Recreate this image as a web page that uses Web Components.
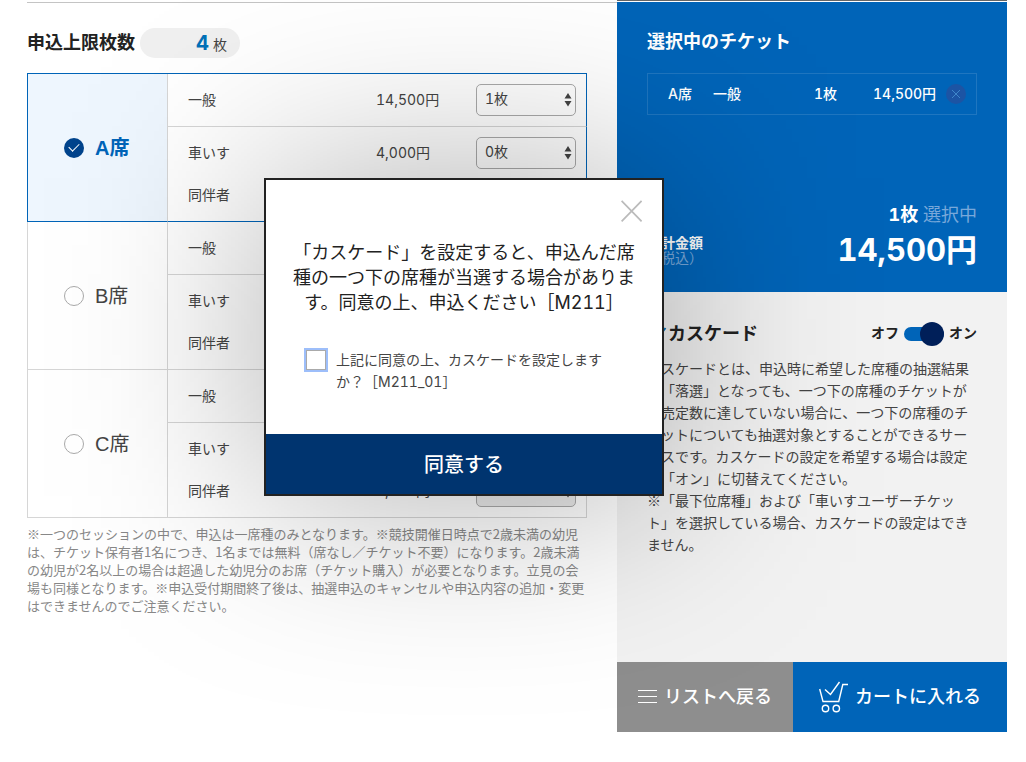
<!DOCTYPE html>
<html lang="ja">
<head>
<meta charset="utf-8">
<meta name="viewport" content="width=device-width, initial-scale=1">
<title>チケット抽選申込</title>
<style>
  html, body { margin: 0; min-height: 100%; background: #fff; }
  body {
    --blue: #0064b8;
    --navy: #00346f;
    --line: #d6d6d6;
    font: 14px/22px Inter, "Noto Sans CJK JP", sans-serif;
    font-variant-numeric: tabular-nums;
    text-spacing-trim: space-all;
    color: #444;
  }
</style>
</head>
<body>
<ticket-page>
  <limit-badge slot="main" count="4">申込上限枚数</limit-badge>
  <seat-table slot="main"></seat-table>
  <session-note slot="main">※一つのセッションの中で、申込は一席種のみとなります。※競技開催日時点で2歳未満の幼児は、チケット保有者1名につき、1名までは無料（席なし／チケット不要）になります。2歳未満の幼児が2名以上の場合は超過した幼児分のお席（チケット購入）が必要となります。立見の会場も同様となります。※申込受付期間終了後は、抽選申込のキャンセルや申込内容の追加・変更はできませんのでご注意ください。</session-note>
  <order-summary slot="side"></order-summary>
  <cascade-panel slot="side">カスケードとは、申込時に希望した席種の抽選結果が「落選」となっても、一つ下の席種のチケットが販売定数に達していない場合に、一つ下の席種のチケットについても抽選対象とすることができるサービスです。カスケードの設定を希望する場合は設定を「オン」に切替えてください。<br>※「最下位席種」および「車いすユーザーチケット」を選択している場合、カスケードの設定はできません。</cascade-panel>
  <action-bar slot="side"></action-bar>
</ticket-page>
<consent-dialog>
  「カスケード」を設定すると、申込んだ席種の一つ下の席種が当選する場合があります。同意の上、申込ください［M211］
  <span slot="check">上記に同意の上、カスケードを設定しますか？［M211_01］</span>
</consent-dialog>

<script>
const define = (name, html, setup) => {
  const template = document.createElement('template');
  template.innerHTML = html;
  customElements.define(name, class extends HTMLElement {
    constructor() {
      super();
      this.attachShadow({ mode: 'open' }).append(template.content.cloneNode(true));
    }
    connectedCallback() {
      if (setup && !this.ready) { this.ready = true; setup(this, this.shadowRoot); }
    }
  });
};

define('ticket-page', `
  <style>
    :host { display: flex; align-items: flex-start; padding: 0 19px 30px 27px; }
    main { flex: 1; min-width: 0; margin-top: 2px; padding: 25px 30px 0 0; border-top: 1px solid #c4c4c4; }
    aside { flex: 0 0 390px; border-top: 1px solid #666; padding-top: 1px; }
  </style>
  <main><slot name="main"></slot></main>
  <aside><slot name="side"></slot></aside>
`);

define('limit-badge', `
  <style>
    :host { display: flex; align-items: center; gap: 5px; margin-bottom: 15px; }
    h2 { margin: 0; font-size: 18px; line-height: 30px; color: #222; }
    p { box-sizing: border-box; width: 100px; height: 30px; margin: 0; padding-right: 13px; border-radius: 15px;
        background: #f0f0f0; text-align: right; line-height: 30px; }
    b { font-size: 20px; color: #0070b8; margin-right: 4px; }
  </style>
  <h2><slot></slot></h2>
  <p><b></b>枚</p>
`, (host, root) => { root.querySelector('b').textContent = host.getAttribute('count'); });

define('count-select', `
  <style>
    :host { display: block; position: relative; width: 100px; height: 32px; }
    select { appearance: none; box-sizing: border-box; width: 100%; height: 32px; padding: 0 24px 2px 8px;
      border: 1px solid #aaa; border-radius: 5px; background: rgba(255,255,255,.2); font: inherit; color: inherit; }
    select:disabled { background: rgba(0,0,0,.08); opacity: 1; }
    svg { position: absolute; right: 4px; top: 9px; pointer-events: none; }
  </style>
  <select></select>
  <svg width="8" height="14" viewBox="0 0 8 14" fill="#444" aria-hidden="true"><path d="M4 0l3.5 5.5h-7zM4 13.500l3.500-5.500h-7z"/></svg>
`, (host, root) => {
  const select = root.querySelector('select');
  select.setAttribute('aria-label', host.getAttribute('label'));
  for (let n = 0; n <= 4; n++) select.add(new Option(n + '枚', n));
  select.value = host.getAttribute('value');
  select.disabled = !host.getAttribute('value');
});

define('seat-table', `
  <style>
    :host { display: block; margin-bottom: 7px; }
    table { width: 100%; border-collapse: separate; border-spacing: 0; table-layout: fixed; border-top: 1px solid var(--blue); }
    th, td { box-sizing: border-box; padding: 0; height: 53px; text-align: left; font-weight: 400; border: 0 solid var(--line); }
    tr.pair > * { height: 52px; }
    tr.last > * { height: 43px; vertical-align: top; line-height: 32px; border-bottom-width: 1px; }
    tr.first > * { border-bottom-width: 1px; }
    .seat { border-width: 0 1px 1px 1px; }
    .kind { padding-left: 20px; }
    .num { border-right-width: 1px; }
    .on .seat { border-left-color: var(--blue); border-bottom-color: var(--blue); background: #eef6fe; }
    .on .num { border-right-color: var(--blue); }
    .on .last > * { border-bottom-color: var(--blue); }
    label { display: flex; align-items: center; gap: 11px; padding-left: 36px; font: 20px/30px "Liberation Sans", "Noto Sans CJK JP", sans-serif; }
    .on label { color: var(--blue); font-weight: 700; }
    input { appearance: none; box-sizing: border-box; position: relative; margin: 0; width: 20px; height: 20px;
      border: 1px solid #aaa; border-radius: 50%; }
    input:checked { border: 0; background: #00438c; }
    input:checked::after { content: ""; position: absolute; left: 5px; top: 5px; width: 9px; height: 5px;
      border: solid #fff; border-width: 0 0 1px 1px; transform: rotate(-45deg); }
  </style>
  <table>
    <colgroup><col style="width:141px"><col><col style="width:100px"><col style="width:111px"></colgroup>
  </table>
`, (host, root) => {
  const table = root.querySelector('table');
  const seats = [
    { name: 'A席', on: true, prices: ['14,500円', '4,000円', ''] },
    { name: 'B席', on: false, prices: ['', '', ''] },
    { name: 'C席', on: false, prices: ['', '', '4,000円'] },
  ];
  const kinds = [['first', '一般'], ['pair', '車いす'], ['last', '同伴者']];
  for (const { name, on, prices } of seats) {
    const head = `<th class="seat" scope="rowgroup" rowspan="3"><label><input type="radio" name="seat" ${on ? 'checked' : ''}>${name}</label></th>`;
    const count = i => on ? (i ? 0 : 1) : '';
    const rows = kinds.map(([cls, kind], i) => `<tr class="${cls}">${i ? '' : head}
      <th class="kind" scope="row">${kind}</th><td>${prices[i]}</td>
      <td class="num"><count-select label="${name} ${kind}" value="${count(i)}"></count-select></td></tr>`);
    table.insertAdjacentHTML('beforeend', `<tbody class="${on ? 'on' : ''}">${rows.join('')}</tbody>`);
  }
});

define('session-note', `
  <style>:host { display: block; font-family: "Noto Sans CJK JP", sans-serif; font-size: 13px; line-height: 18px; color: #888; }</style>
  <slot></slot>
`);

define('order-summary', `
  <style>
    :host { display: flex; flex-direction: column; box-sizing: border-box; min-height: 290px; padding: 25px 30px 20px;
      background: var(--blue); color: #fff; }
    h2 { margin: 0 0 16px; font-size: 18px; line-height: 30px; }
    .item { display: flex; align-items: center; height: 40px; padding: 0 10px 0 20px; border: 1px solid rgba(255,255,255,.12); font-weight: 500; }
    .seat { width: 45px; } .kind { flex: 1; } .count { width: 59px; } .price { width: 73px; }
    button { width: 20px; height: 20px; padding: 0; border: 0; border-radius: 50%; background: #1c54a4; }
    svg { display: block; }
    .sum { display: grid; grid-template-columns: 1fr auto; margin-top: auto; align-items: end; }
    .count-line { grid-column: 1 / 3; text-align: right; font-size: 18px; line-height: 26px; color: #78a8da; }
    .count-line b { color: #fff; }
    .label { line-height: 15px; padding-bottom: 7px; color: #78a8da; }
    .label b { display: block; color: #fff; }
    .total { font-size: 31px; line-height: 44px; font-weight: 700; }
  </style>
  <h2>選択中のチケット</h2>
  <div class="item">
    <span class="seat">A席</span><span class="kind">一般</span><span class="count">1枚</span><span class="price">14,500円</span>
    <button type="button" aria-label="削除"><svg width="20" height="20" viewBox="0 0 20 20" stroke="#3f86ca"><path d="M6 6l8 8M14 6l-8 8"/></svg></button>
  </div>
  <div class="sum">
    <div class="count-line"><b>1枚</b> 選択中</div>
    <div class="label"><b>合計金額</b>（税込）</div>
    <div class="total">14,500円</div>
  </div>
`);

define('cascade-panel', `
  <style>
    :host { display: block; box-sizing: border-box; min-height: 370px; padding: 25px 30px; background: #f2f2f2; font-family: "Noto Sans CJK JP", sans-serif; }
    header { display: flex; align-items: center; height: 30px; margin-bottom: 10px; color: #222; }
    h2 { flex: 1; display: flex; align-items: center; gap: 1px; margin: 0; font-size: 18px; line-height: 28px; }
    label { display: flex; align-items: center; gap: 5px; font-weight: 700; }
    input { appearance: none; position: relative; margin: 4px 0 0; width: 40px; height: 14px; border-radius: 7px; background: var(--blue); }
    input::before { content: ""; position: absolute; top: -5px; right: 0; width: 24px; height: 24px; border-radius: 50%; background: #001f59; }
    input:not(:checked)::before { right: auto; left: 0; }
    p { margin: 0; }
  </style>
  <header>
    <h2><svg width="20" height="18" viewBox="0 0 20 18" fill="none" stroke="#0070b8" stroke-width="2" aria-hidden="true"><path d="M4 8l6 8L18.500 5"/></svg>カスケード</h2>
    <label>オフ<input type="checkbox" role="switch" checked aria-label="カスケード">オン</label>
  </header>
  <p><slot></slot></p>
`);

define('action-bar', `
  <style>
    :host { display: flex; height: 70px; }
    button { display: flex; align-items: center; padding: 0; border: 0; color: #fff; font: inherit; font-size: 18px; font-weight: 500; }
    .back { flex: 0 0 176px; gap: 7px; padding-left: 21px; background: #8e8e8e; }
    .cart { flex: 1; gap: 7px; padding-left: 26px; background: var(--blue); }
    svg { flex: none; fill: none; stroke: #fff; }
  </style>
  <button type="button" class="back"><svg width="19" height="14" viewBox="0 0 19 14" aria-hidden="true"><path d="M0 .5h19M0 6.500h19M0 12.500h19"/></svg>リストへ戻る</button>
  <button type="button" class="cart"><svg width="29" height="32" viewBox="0 0 29 32" stroke-width="1.4" aria-hidden="true"><path d="M.7 8l3.300 12.500h15.700L23.800 3.500H29M6 8.500l5.500 5L20.500 1"/><circle cx="6.500" cy="27.500" r="3.200"/><circle cx="17.300" cy="27.500" r="3.200"/></svg>カートに入れる</button>
`);

define('consent-dialog', `
  <style>
    :host { position: fixed; inset: 0; display: flex; align-items: center; justify-content: center; padding: 0 98px 88px 0; }
    section { position: relative; box-sizing: border-box; width: 400px; max-width: 100%; border: 2px solid #222; }
    section::before { content: ""; position: absolute; z-index: -1; inset: -2px; background: rgba(0,0,0,.32); filter: blur(100px); }
    .body { padding: 60px 24px 41px; background: #fff; }
    p { margin: 0; text-align: center; font-size: 18px; line-height: 25px; color: #222; }
    label { display: grid; grid-template-columns: 20px 272px; gap: 10px; margin: 34px 0 0 16px; }
    input { appearance: none; box-sizing: border-box; width: 20px; height: 20px; margin: 1px 0 0; border: 1px solid #aaa; box-shadow: 0 0 0 2px #9dbefa; background: #fff; }
    .close { position: absolute; top: 20px; right: 20px; padding: 0; border: 0; background: none; }
    .close svg { display: block; }
    .ok { display: block; width: 100%; height: 60px; border: 0; padding: 2px 0 0; background: var(--navy); color: #fff; font: inherit; font-size: 20px; font-weight: 500; }
  </style>
  <section role="dialog" aria-modal="true" aria-label="カスケードの設定">
    <button type="button" class="close" aria-label="閉じる"><svg width="21" height="22" viewBox="0 0 21 22" stroke="#bbb" stroke-width="1.800"><path d="M.6.8l20 20.500M20.600.8l-20 20.500"/></svg></button>
    <div class="body">
      <p><slot></slot></p>
      <label><input type="checkbox"><slot name="check"></slot></label>
    </div>
    <button type="button" class="ok">同意する</button>
  </section>
`);
</script>
</body>
</html>
